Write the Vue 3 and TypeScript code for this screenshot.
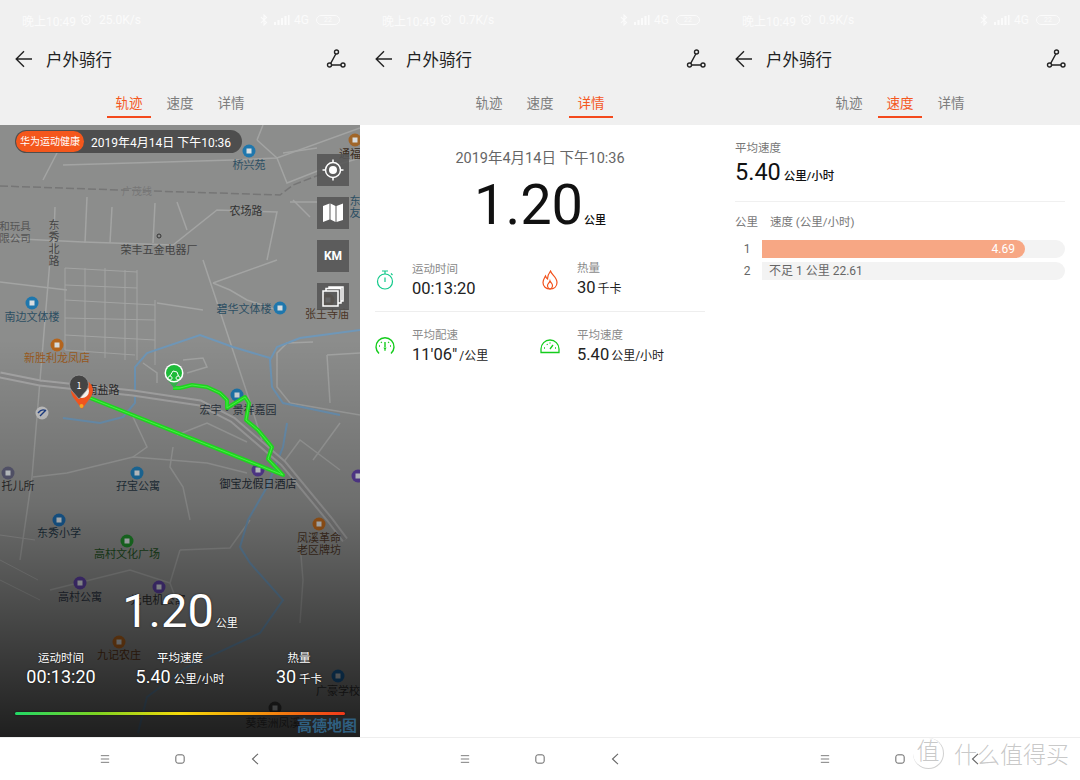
<script setup lang="ts">
const tabs = ['轨迹', '速度', '详情']

const panels = [
  { speed: '25.0K/s', active: 0 },
  { speed: '0.7K/s', active: 2 },
  { speed: '0.9K/s', active: 1 }
]

// map geometry, in page coordinates (viewBox starts at y=125)
const roads = [
  '63,165 233,160 277,158 360,128',
  '43,180 57,153',
  '277,158 287,183 320,170 360,158',
  '257,140 263,125',
  '257,140 277,158',
  '283,153 317,148',
  '290,202 317,202',
  '293,200 310,217',
  '87,197 85,243',
  '55,207 53,260',
  '112,207 110,243',
  '155,203 153,243',
  '0,238 83,242 173,245 217,210 277,212 267,260',
  '177,202 187,230',
  '203,260 247,393 262,440',
  '50,260 32,477 20,560',
  '0,282 67,290',
  '157,303 203,310',
  '143,363 157,373 157,383',
  '183,360 203,358 207,367 187,373',
  '213,283 230,290 247,300 277,310',
  '213,283 277,260',
  '313,342 287,343 277,353 277,387 290,403 360,415',
  '327,355 360,353',
  '327,355 330,403',
  '340,423 313,460',
  '33,477 67,473 133,457 207,463 247,473',
  '133,417 147,447 133,457',
  '177,435 207,423 247,442',
  '173,447 170,467 183,487 190,520',
  '180,550 230,548 250,520',
  '180,550 170,583 180,610',
  '300,543 303,580 300,623',
  '50,590 130,570 170,583',
  '283,463 300,440 340,470'
]
const grid = [
  '65,268 65,350', '85,268 85,355', '105,268 105,358', '125,270 125,360', '137,270 137,360', '155,300 155,365',
  '65,268 137,272', '65,285 137,288', '65,300 155,305', '65,318 155,320', '65,335 155,340', '65,350 135,355',
  '0,535 35,540', '0,560 38,580', '0,580 40,600'
]
const rivers = [
  '63,418 100,423 123,417 135,403 135,367 147,353 200,335 233,347 270,358',
  '360,330 300,338 277,347 270,360 272,387 283,403 340,415',
  '287,423 283,447 267,487 248,520 240,547 250,563 283,600 260,633 187,667 147,697 138,733'
]
const mainRoad = '0,375 40,383 133,393 200,403 233,420 283,463 330,520 345,540'

interface Label { x: number; y: number; t: string; c: string; s?: number; v?: boolean }
const labels: Label[] = [
  { x: 249, y: 169, t: '桥兴苑', c: '#2c4f63' },
  { x: 246, y: 215, t: '农场路', c: '#333' },
  { x: 137, y: 195, t: '广茂线', c: '#777', s: 10 },
  { x: 159, y: 254, t: '荣丰五金电器厂', c: '#444' },
  { x: 15, y: 230, t: '和玩具', c: '#555', s: 10.500 },
  { x: 15, y: 242, t: '限公司', c: '#555', s: 10.500 },
  { x: 54, y: 243, t: '东秀北路', c: '#444', v: true },
  { x: 32, y: 321, t: '南边文体楼', c: '#2c4f63' },
  { x: 57, y: 362, t: '新胜利龙凤店', c: '#9a5a1c' },
  { x: 244, y: 313, t: '碧华文体楼', c: '#2c4f63' },
  { x: 327, y: 318, t: '张王寺庙', c: '#4a3526' },
  { x: 238, y: 414, t: '宏宇·景祥嘉园', c: '#2b3540' },
  { x: 103, y: 394, t: '南盐路', c: '#2a2a2a' },
  { x: 258, y: 488, t: '御宝龙假日酒店', c: '#1f2a33' },
  { x: 138, y: 490, t: '孖宝公寓', c: '#25343f' },
  { x: 18, y: 490, t: '托儿所', c: '#2e2e2e' },
  { x: 59, y: 537, t: '东秀小学', c: '#1f3442' },
  { x: 127, y: 558, t: '高村文化广场', c: '#1d4d1d' },
  { x: 80, y: 601, t: '高村公寓', c: '#2b3340' },
  { x: 158, y: 604, t: '光电机公寓', c: '#2a2a2a' },
  { x: 119, y: 659, t: '九记农庄', c: '#5c3312' },
  { x: 319, y: 542, t: '凤溪革命', c: '#4a3526' },
  { x: 319, y: 554, t: '老区牌坊', c: '#4a3526' },
  { x: 338, y: 695, t: '广豪学校', c: '#333' },
  { x: 273, y: 727, t: '葵莲洲凤溪', c: '#444' },
  { x: 350, y: 158, t: '通福', c: '#3a2c20' },
  { x: 355, y: 207, t: '东友', c: '#2c4f63', v: true }
]
const pois = [
  { x: 249, y: 151, c: '#1f77ad' }, { x: 32, y: 303, c: '#1f77ad' }, { x: 280, y: 308, c: '#1f77ad' },
  { x: 57, y: 345, c: '#b5651d' }, { x: 237, y: 395, c: '#1f77ad' }, { x: 137, y: 473, c: '#1f77ad' },
  { x: 258, y: 470, c: '#5c3f9e' }, { x: 8, y: 473, c: '#60607a' }, { x: 59, y: 520, c: '#1a66a6' },
  { x: 127, y: 541, c: '#1f8a2a' }, { x: 80, y: 583, c: '#5b3fa0' }, { x: 159, y: 587, c: '#5b3fa0' },
  { x: 119, y: 642, c: '#b5651d' }, { x: 319, y: 524, c: '#b5651d' }, { x: 338, y: 676, c: '#1a66a6' },
  { x: 328, y: 300, c: '#6e4a28' }, { x: 355, y: 140, c: '#a0662a' }, { x: 358, y: 476, c: '#5c3f9e' },
  { x: 275, y: 708, c: '#444' }
]
const track = '173,388 180,388 192,385 207,387 220,393 227,400 227,408 245,397 249,403 246,420 258,430 272,447 268,459 283,475 90,398'

const bars = [
  { n: 1, width: 263, value: '4.69' },
  { n: 2, width: 0, value: '' }
]
</script>

<template>
  <div class="screen">
    <section v-for="(p, i) in panels" :key="i" class="phone">
      <div class="status">
        <span class="status-left">晚上10:49</span>
        <svg class="alarm" width="12" height="12" viewBox="0 0 12 12" fill="none" stroke="#fbfbfb" stroke-width="1.1">
          <circle cx="6" cy="6.5" r="4" /><path d="M6 4.5v2l1.4 1M1 2.5 2.6 1M11 2.5 9.4 1" />
        </svg>
        <span class="status-speed">{{ p.speed }}</span>
        <span class="spacer"></span>
        <svg width="8" height="12" viewBox="0 0 8 12" fill="none" stroke="#fbfbfb" stroke-width="1.1">
          <path d="M1 3.2 6.5 8.4 4 11V1l2.5 2.6L1 8.8" />
        </svg>
        <svg class="signal" width="16" height="10" viewBox="0 0 16 10" fill="#fbfbfb">
          <rect x="0" y="7" width="2" height="3" /><rect x="3.5" y="5" width="2" height="5" />
          <rect x="7" y="3" width="2" height="7" /><rect x="10.500" y="1" width="2" height="9" />
          <rect x="14" y="0" width="1.500" height="10" />
        </svg>
        <span class="status-net">4G</span>
        <span class="battery">22</span>
      </div>

      <header class="bar">
        <svg width="18" height="18" viewBox="0 0 18 18" fill="none" stroke="#222" stroke-width="1.400">
          <path d="M17 9H1.500M9 1.200 1.200 9 9 16.800" />
        </svg>
        <h1>户外骑行</h1>
        <svg class="route" width="20" height="20" viewBox="0 0 20 20" fill="none" stroke="#222" stroke-width="1.400">
          <circle cx="10.500" cy="3" r="2" /><circle cx="3.500" cy="16" r="2" /><circle cx="17" cy="16" r="2" />
          <path d="M5.500 16H15M9.800 5 4.700 14.300" />
        </svg>
      </header>

      <nav class="tabs">
        <span v-for="(t, j) in tabs" :key="t" class="tab" :class="{ on: j === p.active }">{{ t }}</span>
      </nav>

      <!-- track tab -->
      <div v-if="p.active === 0" class="map">
        <svg class="map-svg" width="360" height="612" viewBox="0 125 360 612">
          <rect x="0" y="125" width="360" height="612" fill="#8c8d8c" />
          <polyline v-for="r in roads" :key="r" :points="r" class="road" />
          <polyline v-for="g in grid" :key="g" :points="g" class="road thin" />
          <polyline points="0,186 120,190 280,195 293,185 345,165" class="rail" />
          <polyline v-for="w in rivers" :key="w" :points="w" class="river" />
          <polyline :points="mainRoad" class="main-road" />
          <polyline :points="mainRoad" class="main-road-in" />
          <g v-for="(c, k) in pois" :key="k">
            <circle :cx="c.x" :cy="c.y" r="6.500" :fill="c.c" />
            <rect :x="c.x - 2.500" :y="c.y - 2.500" width="5" height="5" fill="#d8dde0" />
          </g>
          <text
            v-for="(l, k) in labels"
            :key="k"
            :class="{ vertical: l.v }"
            :x="l.x"
            :y="l.y"
            :fill="l.c"
            :font-size="l.s ?? 11"
            text-anchor="middle"
          >{{ l.t }}</text>
          <circle cx="42" cy="413" r="6.500" fill="#c9c9c9" />
          <path d="M38 413q4-5 8-2M40 416q3-3 6-6" stroke="#1d3f8a" stroke-width="1.400" fill="none" />
          <circle cx="159" cy="236" r="2" fill="none" stroke="#333" />
        </svg>
        <div class="map-shade"></div>
        <svg class="map-svg" width="360" height="612" viewBox="0 125 360 612">
          <polyline :points="track" fill="none" stroke="#1fd41f" stroke-width="4" stroke-linejoin="round" />
          <polyline :points="track" fill="none" stroke="#46f046" stroke-width="1" />
          <!-- start pin -->
          <path d="M174 388 166 378h16Z" fill="#35b04c" />
          <circle cx="174" cy="373" r="9.500" fill="#fff" />
          <circle cx="174" cy="373" r="8" fill="#1fbb3a" />
          <path d="M170 376a2 2 0 1 0 .1 0M178 376a2 2 0 1 0 .1 0M170 376l3-5 4 1 1.500 4" stroke="#fff" stroke-width="1" fill="none" />
          <!-- end pin -->
          <path d="M82 409 73 397a11 11 0 1 1 18 0Z" fill="#f0541e" />
          <circle cx="82" cy="391" r="7" fill="#f4f0ec" />
          <circle cx="81.500" cy="406" r="2" fill="#f5a623" />
          <!-- km pin -->
          <path d="M79 399 72 391a9.500 9.500 0 1 1 14 0Z" fill="#444" stroke="#999" stroke-width=".8" />
          <text x="79" y="389" fill="#fff" font-size="9" text-anchor="middle">1</text>
        </svg>

        <div class="pill">
          <span class="pill-tag">华为运动健康</span>
          <span class="pill-date">2019年4月14日 下午10:36</span>
        </div>

        <div class="tools">
          <span class="tool">
            <svg width="22" height="22" viewBox="0 0 22 22" fill="none" stroke="#fff">
              <circle cx="11" cy="11" r="7.500" stroke-width="1.500" /><circle cx="11" cy="11" r="4" fill="#fff" stroke="none" />
              <path d="M11 0.500V4M11 18v3.500M0.500 11H4M18 11h3.500" stroke-width="1.500" />
            </svg>
          </span>
          <span class="tool">
            <svg width="22" height="22" viewBox="0 0 22 22" fill="#fff">
              <path d="M1 4 7.500 1.500v16L1 20ZM8.500 1.500l5 2.500v16l-5-2.500ZM14.500 4 21 1.500V18l-6.500 2Z" />
            </svg>
          </span>
          <span class="tool km">KM</span>
          <span class="tool last">
            <svg width="22" height="22" viewBox="0 0 22 22" fill="none" stroke="#fff" stroke-width="1.500">
              <rect x="1" y="5" width="15" height="15" /><path d="M4 5V2.500h15V17h-3M7 2.500V1h14v14h-2" />
            </svg>
          </span>
        </div>

        <div class="map-summary">
          <div class="map-total"><b>1.20</b><small>公里</small></div>
          <div class="map-stats">
            <div class="map-stat"><span>运动时间</span><strong>00:13:20</strong></div>
            <div class="map-stat"><span>平均速度</span><strong>5.40<small>公里/小时</small></strong></div>
            <div class="map-stat"><span>热量</span><strong>30<small>千卡</small></strong></div>
          </div>
          <div class="rainbow"></div>
        </div>
        <span class="amap">高德地图</span>
      </div>

      <!-- detail tab -->
      <div v-else-if="p.active === 2" class="page detail">
        <p class="date">2019年4月14日 下午10:36</p>
        <div class="total"><b>1.20</b><small>公里</small></div>
        <div class="stat-grid">
          <div class="stat">
            <svg width="18" height="20" viewBox="0 0 18 20" fill="none" stroke="#12c98a" stroke-width="1.200">
              <circle cx="9" cy="11.500" r="7.500" /><path d="M9 7.500v4.500M6 1h6M9 1v3M15 3.500l1.500 1.500" />
            </svg>
            <div><span>运动时间</span><strong>00:13:20</strong></div>
          </div>
          <div class="stat">
            <svg width="18" height="20" viewBox="0 0 18 20" fill="none" stroke="#f2511b" stroke-width="1.200">
              <path d="M9.500 1c1 4 6.500 6 6.500 11.500 0 4-3 6.500-7 6.500s-7-2.500-7-6.500c0-3 1.500-4.500 2.500-6.500.5 1.500 1 2.500 2 3 0-3 1.500-6 3-8Z" />
              <path d="M9 11c.5 1.500 2.500 2.500 2.500 4.500S10 19 9 19s-2.500-1.500-2.500-3.500S8.500 13 9 11Z" />
            </svg>
            <div><span>热量</span><strong>30<small>千卡</small></strong></div>
          </div>
          <div class="stat">
            <svg width="20" height="18" viewBox="0 0 20 18" fill="none" stroke="#14cc1c" stroke-width="1.400">
              <path d="M4 16.500A9 9 0 1 1 16 16.500M10 5v5M10 13v.5M4 9h1M15 9h1M6 5l.8.8M14 5l-.8.8" />
              <path d="M8.500 10.500h3L10 14Z" fill="#14cc1c" stroke="none" />
            </svg>
            <div><span>平均配速</span><strong>11'06"<small>/公里</small></strong></div>
          </div>
          <div class="stat">
            <svg width="20" height="16" viewBox="0 0 20 16" fill="none" stroke="#14cc1c" stroke-width="1.300">
              <path d="M1 14.500V11a9 9 0 0 1 18 0v3.500ZM10 11l3-4M4 10h1M15 10h1M7 6l.5.8M10 4.500v1" />
            </svg>
            <div><span>平均速度</span><strong>5.40<small>公里/小时</small></strong></div>
          </div>
        </div>
      </div>

      <!-- speed tab -->
      <div v-else class="page speed">
        <span class="speed-label">平均速度</span>
        <div class="speed-value">5.40<small>公里/小时</small></div>
        <div class="speed-head"><span>公里</span><span>速度 (公里/小时)</span></div>
        <div v-for="b in bars" :key="b.n" class="speed-row">
          <span class="speed-n">{{ b.n }}</span>
          <div class="speed-track">
            <div v-if="b.width" class="speed-fill" :style="{ width: b.width + 'px' }">{{ b.value }}</div>
            <span v-else class="speed-note">不足 1 公里 22.61</span>
          </div>
        </div>
      </div>

      <footer class="nav">
        <svg width="12" height="10" viewBox="0 0 12 10" fill="none" stroke="#666" stroke-width="1">
          <path d="M1 1h10M1 5h10M1 9h10" />
        </svg>
        <svg width="12" height="12" viewBox="0 0 12 12" fill="none" stroke="#666" stroke-width="1.200">
          <rect x="1" y="1" width="10" height="10" rx="2.500" />
        </svg>
        <svg width="8" height="12" viewBox="0 0 8 12" fill="none" stroke="#666" stroke-width="1.100">
          <path d="M7 .8 1.500 6 7 11.200" />
        </svg>
      </footer>

      <div v-if="i === 2" class="watermark">
        <span class="wm-seal">值</span><span>什么值得买</span>
      </div>
    </section>
  </div>
</template>

<style>
html,
body {
  margin: 0;
  background: #fff;
}
</style>

<style scoped>
.screen {
  display: flex;
  width: 1080px;
  height: 780px;
  overflow: hidden;
  font-family: Roboto, "Noto Sans CJK SC", sans-serif;
}

.phone {
  position: relative;
  display: flex;
  flex-direction: column;
  width: 360px;
  height: 780px;
}

.status {
  display: flex;
  align-items: center;
  gap: 4px;
  height: 40px;
  padding: 0 20px 0 22px;
  box-sizing: border-box;
  background: #f0f0f0;
  color: #fbfbfb;
  font-size: 12px;
}

.status-speed {
  margin-left: 3px;
}

.spacer {
  flex: 1;
}

.signal {
  margin-left: 2px;
}

.battery {
  width: 22px;
  height: 8px;
  margin-left: 3px;
  border: 1px solid #fbfbfb;
  border-radius: 5px;
  font-size: 7px;
  line-height: 8px;
  text-align: center;
}

.bar {
  display: flex;
  align-items: center;
  height: 38px;
  padding: 0 14px 0 15px;
  background: #f0f0f0;
}

.bar h1 {
  flex: 1;
  margin: 0 0 0 13px;
  color: #222;
  font-size: 16.500px;
  font-weight: 400;
}

.tabs {
  display: flex;
  justify-content: center;
  gap: 7px;
  height: 47px;
  padding-top: 15px;
  box-sizing: border-box;
  background: #f0f0f0;
}

.tab {
  width: 44px;
  height: 25px;
  box-sizing: border-box;
  border-bottom: 2px solid transparent;
  color: #7d7d7d;
  font-size: 13.500px;
  line-height: 20px;
  text-align: center;
}

.tab.on {
  border-bottom-color: #f4491c;
  color: #f4581f;
}

.map {
  position: relative;
  height: 612px;
  overflow: hidden;
  background: #8c8d8c;
}

.map-svg {
  position: absolute;
  top: 0;
  left: 0;
}

.map-svg text {
  font-family: "Noto Sans CJK SC", sans-serif;
}

.map-svg text.vertical {
  writing-mode: vertical-rl;
  letter-spacing: 1px;
}

.road {
  fill: none;
  stroke: #a3a4a3;
  stroke-width: 1.500;
}

.road.thin {
  stroke-width: 1;
}

.main-road {
  fill: none;
  stroke: #a8a8a8;
  stroke-width: 7;
}

.main-road-in {
  fill: none;
  stroke: #8a8a8a;
  stroke-width: 3;
}

.rail {
  fill: none;
  stroke: #767676;
  stroke-width: 1.500;
  stroke-dasharray: 8 3;
}

.river {
  fill: none;
  stroke: #6f97b8;
  stroke-width: 2;
}

.map-shade {
  position: absolute;
  inset: 0;
  background: linear-gradient(rgba(0, 0, 0, 0) 0%, rgba(0, 0, 0, 0) 35%, rgba(0, 0, 0, 0.22) 62%, rgba(0, 0, 0, 0.78) 100%);
}

.pill {
  position: absolute;
  top: 5px;
  left: 15px;
  display: flex;
  align-items: center;
  height: 23px;
  width: 227px;
  border-radius: 12px;
  background: rgba(60, 60, 60, 0.78);
}

.pill-tag {
  width: 68px;
  height: 21px;
  margin-left: 1px;
  border-radius: 11px;
  background: #f4571c;
  color: #fff;
  font-size: 10px;
  line-height: 21px;
  text-align: center;
}

.pill-date {
  margin-left: 7px;
  color: #fff;
  font-size: 12px;
  white-space: nowrap;
}

.tools {
  position: absolute;
  top: 29px;
  left: 317px;
  display: flex;
  flex-direction: column;
  gap: 11px;
}

.tool {
  display: flex;
  align-items: center;
  justify-content: center;
  width: 32px;
  height: 32px;
  background: rgba(85, 85, 85, 0.88);
}

.tool.last {
  height: 27px;
}

.km {
  color: #fff;
  font-size: 12px;
  font-weight: 700;
}

.map-summary {
  position: absolute;
  left: 0;
  right: 0;
  bottom: 22px;
  color: #fff;
  text-shadow: 0 0 2px rgba(0, 0, 0, 0.7);
}

.map-total {
  display: flex;
  align-items: baseline;
  justify-content: center;
}

.map-total b {
  font-size: 47px;
  font-weight: 400;
  line-height: 56px;
}

.map-total small {
  margin-left: 2px;
  font-size: 11px;
}

.map-stats {
  display: grid;
  grid-template-columns: 122px 116px 122px;
  margin-top: 11px;
  text-align: center;
}

.map-stat span {
  display: block;
  font-size: 11.500px;
  line-height: 16px;
}

.map-stat strong {
  display: block;
  font-size: 18px;
  font-weight: 400;
  line-height: 22px;
  white-space: nowrap;
}

.map-stat small {
  margin-left: 3px;
  font-size: 11.500px;
}

.rainbow {
  height: 3px;
  margin: 22px 15px 0;
  border-radius: 2px;
  background: linear-gradient(90deg, #22d866, #7ed321 25%, #f5d90a 50%, #f59b0a 72%, #f0381a);
  box-shadow: 0 0 2px rgba(0, 0, 0, 0.6);
}

.amap {
  position: absolute;
  right: 3px;
  bottom: 2px;
  color: #2f5f80;
  font-size: 15px;
  font-weight: 700;
}

.page {
  flex: 1;
  box-sizing: border-box;
  background: #fff;
}

.detail {
  padding: 24px 15px 0;
}

.date {
  margin: 0;
  color: #666;
  font-size: 14.500px;
  line-height: 20px;
  text-align: center;
}

.total {
  display: flex;
  align-items: baseline;
  justify-content: center;
  margin-top: 8px;
  color: #111;
}

.total b {
  font-size: 56px;
  font-weight: 400;
  line-height: 56px;
}

.total small {
  margin-left: 1px;
  font-size: 11px;
  font-weight: 500;
}

.stat-grid {
  display: grid;
  grid-template-columns: 165px 165px;
  grid-auto-rows: 64px;
  margin-top: 15px;
}

.stat {
  display: flex;
  align-items: center;
  gap: 17px;
  box-sizing: border-box;
}

.stat svg {
  flex: none;
  width: 20px;
}

.stat:nth-child(-n + 2) {
  border-bottom: 1px solid #eee;
}

.stat:nth-child(n + 3) {
  padding-top: 4px;
}

.stat span {
  display: block;
  color: #8a8a8a;
  font-size: 11.500px;
  line-height: 16px;
}

.stat strong {
  display: block;
  margin-top: 2px;
  color: #222;
  font-size: 16.500px;
  font-weight: 400;
  line-height: 20px;
  white-space: nowrap;
}

.stat small {
  margin-left: 2px;
  font-size: 12px;
}

.speed {
  padding: 15px 15px 0;
}

.speed-label {
  display: block;
  color: #777;
  font-size: 11.500px;
  line-height: 16px;
}

.speed-value {
  height: 34px;
  margin-top: 1px;
  border-bottom: 1px solid #f0f0f0;
  padding-bottom: 10px;
  color: #111;
  font-size: 23.500px;
  line-height: 30px;
}

.speed-value small {
  margin-left: 3px;
  font-size: 11.500px;
  font-weight: 500;
}

.speed-head {
  display: flex;
  gap: 12px;
  margin: 11px 0 9px;
  color: #777;
  font-size: 11.500px;
  line-height: 18px;
}

.speed-row {
  display: flex;
  align-items: center;
  height: 18px;
  margin-bottom: 4px;
}

.speed-n {
  width: 27px;
  padding-right: 3px;
  box-sizing: border-box;
  color: #666;
  font-size: 12px;
  text-align: center;
}

.speed-track {
  width: 303px;
  height: 18px;
  border-radius: 0 9px 9px 0;
  background: #f3f3f3;
}

.speed-fill {
  height: 18px;
  box-sizing: border-box;
  border-radius: 0 9px 9px 0;
  padding-right: 10px;
  background: #f7a784;
  color: #fff;
  font-size: 12px;
  line-height: 18px;
  text-align: right;
}

.speed-note {
  display: block;
  padding-left: 7px;
  color: #666;
  font-size: 12px;
  line-height: 18px;
}

.nav {
  display: flex;
  align-items: center;
  justify-content: center;
  gap: 65px;
  flex: none;
  height: 43px;
  box-sizing: border-box;
  border-top: 1px solid #eee;
  background: #fff;
}

.nav svg {
  width: 10px;
  flex: none;
}

.watermark {
  position: absolute;
  left: 193px;
  bottom: 10px;
  display: flex;
  align-items: center;
  gap: 10px;
  color: rgba(170, 170, 170, 0.65);
  font-size: 23px;
  font-weight: 300;
  white-space: nowrap;
}

.wm-seal {
  width: 30px;
  height: 30px;
  border-radius: 50%;
  border-right: 1px solid rgba(170, 170, 170, 0.55);
  border-bottom: 1px solid rgba(170, 170, 170, 0.55);
  line-height: 28px;
  text-align: center;
}
</style>
